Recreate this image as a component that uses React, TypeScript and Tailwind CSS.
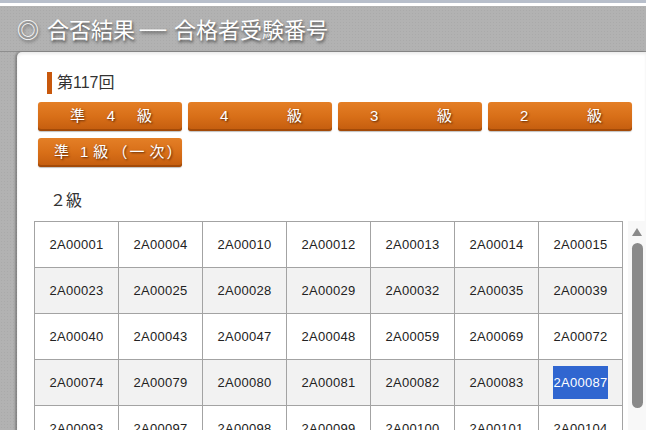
const rows = [
  ["2A00001", "2A00004", "2A00010", "2A00012", "2A00013", "2A00014", "2A00015"],
  ["2A00023", "2A00025", "2A00028", "2A00029", "2A00032", "2A00035", "2A00039"],
  ["2A00040", "2A00043", "2A00047", "2A00048", "2A00059", "2A00069", "2A00072"],
  ["2A00074", "2A00079", "2A00080", "2A00081", "2A00082", "2A00083", "2A00087"],
  ["2A00093", "2A00097", "2A00098", "2A00099", "2A00100", "2A00101", "2A00104"],
  ["2A00110", "2A00113", "2A00118", "2A00120", "2A00121", "2A00125", "2A00130"],
];

const btnBase =
  "flex h-[29px] items-center rounded-[3px] bg-gradient-to-b from-[#e47f26] via-[#d86f18] to-[#c35c0e] text-[15px] text-white shadow-[inset_0_-2px_0_#a34a08,0_1px_1px_rgba(0,0,0,0.25)] [text-shadow:1px_1px_2px_rgba(60,20,0,0.8)]";

function GradeButton({ chars }: { chars: string[] }) {
  return (
    <div className={`${btnBase} justify-between pl-[32px] pr-[30px]`}>
      {chars.map((c, i) => (
        <span key={i}>{c}</span>
      ))}
    </div>
  );
}

export default function App() {
  return (
    <div className="h-[430px] w-[646px] overflow-hidden bg-white font-['Liberation_Sans','Noto_Sans_CJK_JP',sans-serif]">
      <div className="h-[3px] bg-[#b8bfcb]" />
      <div className="h-[3px] bg-white" />

      <div className="flex h-[424px] flex-col bg-[#b2b2b2] bg-[radial-gradient(#aaaaaa_1px,transparent_1px)] bg-[length:3px_3px]">
        {/* Title bar */}
        <div className="flex h-[46px] shrink-0 items-center border-b border-[#8e8e8e] pl-[17px] font-['Noto_Sans_CJK_JP',sans-serif] text-[22px] text-white [text-shadow:1px_2px_3px_rgba(0,0,0,0.6)]">
          <span>◎</span>
          <span className="ml-[8px]">合否結果</span>
          <span className="ml-[7px] inline-block scale-x-[1.2] font-['Liberation_Sans',sans-serif]">—</span>
          <span className="ml-[10px]">合格者受験番号</span>
        </div>

        {/* White panel */}
        <div className="ml-[17px] flex flex-1 flex-col rounded-tl-[5px] bg-white shadow-[-2px_0_2px_rgba(0,0,0,0.25),inset_0_2px_3px_rgba(0,0,0,0.08)]">
          <div className="ml-[30px] mt-[20px] flex h-[22px] items-center">
            <div className="h-[22px] w-[5px] bg-[#c8580c]" />
            <span className="ml-[5px] text-[16px] text-[#333]">第117回</span>
          </div>

          <div className="ml-[21px] mt-[8px] grid w-[594px] grid-cols-4 gap-x-[6px] gap-y-[7px]">
            <GradeButton chars={["準", "4", "級"]} />
            <GradeButton chars={["4", "級"]} />
            <GradeButton chars={["3", "級"]} />
            <GradeButton chars={["2", "級"]} />
            <div className={`${btnBase} pl-[16px]`}>
              <span>準</span>
              <span className="ml-[11px]">1</span>
              <span className="ml-[5px]">級</span>
              <span className="ml-[4px] font-['Noto_Sans_CJK_JP',sans-serif]">（</span>
              <span className="ml-[2px]">一</span>
              <span className="ml-[5px]">次</span>
              <span className="ml-[2px] font-['Noto_Sans_CJK_JP',sans-serif]">）</span>
            </div>
          </div>

          <div className="mt-[24px] h-[20px] pl-[33px] text-[16px] leading-[20px] text-[#333]">２級</div>

          <div className="mt-[10px] flex flex-1 overflow-hidden">
            <div className="ml-[17px] w-[589px] shrink-0 overflow-hidden">
              <div className="grid grid-cols-[repeat(7,84px)] border-l border-t border-[#a3a3a3]">
                {rows.map((row, r) =>
                  row.map((num, c) => {
                    const selected = r === 3 && c === 6;
                    return (
                      <div
                        key={`${r}-${c}`}
                        className={`flex h-[46px] items-center justify-center border-b border-r border-[#a3a3a3] text-[13px] tracking-[0.3px] text-[#222] ${
                          r % 2 === 1 ? "bg-[#f2f2f2]" : "bg-white"
                        }`}
                      >
                        {selected ? (
                          <span className="bg-[#3066d0] leading-[33px] text-white">{num}</span>
                        ) : (
                          num
                        )}
                      </div>
                    );
                  })
                )}
              </div>
            </div>

            {/* Scrollbar */}
            <div className="ml-[5px] flex w-[18px] flex-col items-center bg-[#f8f8f8] pt-[7px]">
              <div className="h-0 w-0 border-b-[8px] border-l-[5.5px] border-r-[5.5px] border-b-[#8a8a8a] border-l-transparent border-r-transparent" />
              <div className="mt-[7px] h-[165px] w-[11px] rounded-full bg-[#8a8a8a]" />
            </div>
          </div>
        </div>
      </div>
    </div>
  );
}
